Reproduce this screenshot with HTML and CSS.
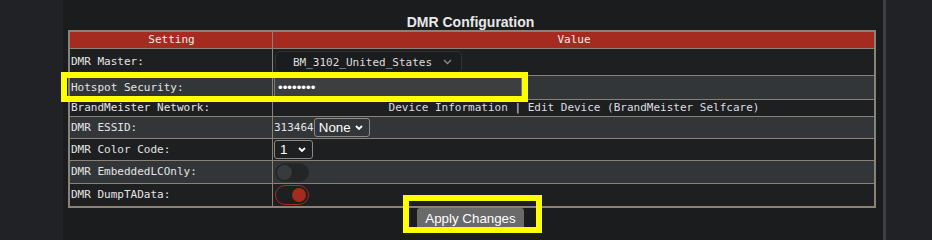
FILE: index.html
```html
<!DOCTYPE html>
<html lang="en">
<head>
    <meta charset="UTF-8">
    <meta name="viewport" content="width=device-width, initial-scale=1.0">
    <title>DMR Configuration</title>
    <link rel="stylesheet" href="styles.css">
</head>
<body>
    <div class="page">
        <div class="gutter"></div>
        <main class="panel">
            <h3 class="title">DMR Configuration</h3>
            <table class="config">
                <tr class="head">
                    <th class="col-setting">Setting</th>
                    <th>Value</th>
                </tr>
                <tr class="dark r-master">
                    <td class="label">DMR Master:</td>
                    <td>
                        <span class="select-wrap">
                            <select class="sel-master">
                                <option>BM_3102_United_States</option>
                            </select>
                            <svg class="chev chev-grey" width="9" height="6" viewBox="0 0 9 6"><polyline points="1,1 4.5,4.5 8,1" fill="none" stroke="#8a8a8a" stroke-width="1.4"/></svg>
                        </span>
                    </td>
                </tr>
                <tr class="light r-security">
                    <td class="label">Hotspot Security:</td>
                    <td><input class="pass" type="password" value="passw0rd"></td>
                </tr>
                <tr class="dark r-network">
                    <td class="label">BrandMeister Network:</td>
                    <td class="links"><a href="#">Device Information</a> | <a href="#">Edit Device (BrandMeister Selfcare)</a></td>
                </tr>
                <tr class="light r-essid">
                    <td class="label">DMR ESSID:</td>
                    <td>313464<span class="select-wrap">
                            <select class="sel-small sel-none">
                                <option>None</option>
                            </select>
                            <svg class="chev" width="8" height="6" viewBox="0 0 8 6"><polyline points="1,1 4,4 7,1" fill="none" stroke="#fff" stroke-width="1.8"/></svg>
                        </span></td>
                </tr>
                <tr class="dark r-color">
                    <td class="label">DMR Color Code:</td>
                    <td>
                        <span class="select-wrap">
                            <select class="sel-small sel-one">
                                <option>1</option>
                            </select>
                            <svg class="chev" width="8" height="6" viewBox="0 0 8 6"><polyline points="1,1 4,4 7,1" fill="none" stroke="#fff" stroke-width="1.8"/></svg>
                        </span>
                    </td>
                </tr>
                <tr class="light r-embedded">
                    <td class="label">DMR EmbeddedLCOnly:</td>
                    <td><span class="toggle"></span></td>
                </tr>
                <tr class="dark r-dump">
                    <td class="label">DMR DumpTAData:</td>
                    <td><span class="toggle on"></span></td>
                </tr>
            </table>
            <div class="actions">
                <button class="apply">Apply Changes</button>
            </div>
        </main>
    </div>

    <div class="mark mark-security"></div>
    <div class="mark mark-apply"></div>
</body>
</html>
```

FILE: styles.css
```css
* {
    margin: 0;
    padding: 0;
    box-sizing: border-box;
}
body {
    background: #202225;
    font-family: "DejaVu Sans Mono", monospace;
    font-size: 11px;
    color: #e4e4e4;
}
.page {
    display: flex;
    height: 240px;
}
.gutter {
    width: 63px;
}
.panel {
    width: 823px;
    padding: 0 10px 0 5px;
    background: #1b1c1e;
    border-right: 3px solid #3d3f42;
}
.title {
    padding-top: 15px;
    line-height: 15px;
    text-align: center;
    font-family: "Liberation Sans", Arial, sans-serif;
    font-size: 14px;
    font-weight: bold;
    color: #e8e8e8;
}

/* settings table */
.config {
    width: 808px;
    border: 2px solid #8b8176;
    border-spacing: 0;
    line-height: 14px;
}
.config th,
.config td {
    padding: 0 0 0 1px;
    border-bottom: 1px solid #8b8176;
    vertical-align: middle;
    text-align: left;
    white-space: nowrap;
}
.config tr:last-child td {
    border-bottom: none;
}
.config th:first-child,
.config td:first-child {
    width: 203px;
    border-right: 1px solid #8b8176;
}
.config th {
    background: #a52a1f;
    font-weight: normal;
    text-align: center;
    color: #ececec;
    height: 17px;
}
.dark { background: #1e1f21; }
.light { background: #333639; }
.r-master td { height: 27px; }
.r-security td { height: 24px; }
.r-network td { height: 17px; }
.r-essid td { height: 22px; }
.r-color td { height: 22px; }
.r-embedded td { height: 23px; }
.r-dump td { height: 22px; }

.links {
    text-align: center !important;
}
.links a {
    color: #dcdde2;
    text-decoration: none;
}

/* selects */
.select-wrap {
    position: relative;
    display: inline-block;
    vertical-align: middle;
}
.select-wrap select {
    appearance: none;
    -webkit-appearance: none;
    display: block;
    outline: none;
}
.chev {
    position: absolute;
    top: 50%;
    transform: translateY(-50%);
    pointer-events: none;
}
.sel-master {
    width: 187px;
    height: 22px;
    margin-left: 1px;
    padding-left: 17px;
    background: #1b1c1e;
    border: 1px solid #2f3134;
    border-radius: 5px;
    color: #dedede;
    font-family: "DejaVu Sans Mono", monospace;
    font-size: 11px;
}
.sel-master + .chev {
    right: 10px;
}
.sel-small {
    height: 19px;
    background: transparent;
    border: 1px solid #8a8a8a;
    border-radius: 3px;
    color: #ffffff;
    font-family: "Liberation Sans", Arial, sans-serif;
    font-size: 13.33px;
    padding-left: 4px;
}
.sel-none {
    width: 56px;
}
.sel-one {
    width: 39px;
    padding-left: 5px;
}
.sel-small + .chev {
    right: 7px;
}

/* password */
.pass {
    display: block;
    width: 248px;
    height: 22px;
    padding-left: 3px;
    background: #3d3e40;
    border: 1px solid #77787a;
    color: #ffffff;
    font-family: "Liberation Sans", Arial, sans-serif;
    font-size: 13.33px;
    outline: none;
}

/* switches */
.toggle {
    position: relative;
    display: block;
    width: 34px;
    height: 19px;
    margin-left: 1px;
    border-radius: 10px;
    background: #232527;
    border: 1px solid #26282a;
}
.toggle::after {
    content: "";
    position: absolute;
    top: 1px;
    left: 1px;
    width: 15px;
    height: 15px;
    border-radius: 50%;
    background: #383b3e;
}
.toggle.on {
    height: 20px;
    background: #1e1f21;
    border-color: #a52a1f;
}
.toggle.on::after {
    left: auto;
    right: 2px;
    top: 2px;
    width: 14px;
    height: 14px;
    background: #a52a1f;
}

/* actions */
.actions {
    text-align: center;
}
.apply {
    width: 107px;
    height: 21px;
    background: #6a6a6a;
    border: none;
    border-radius: 3px;
    color: #ffffff;
    font-family: "Liberation Sans", Arial, sans-serif;
    font-size: 13.33px;
    cursor: pointer;
}

/* highlight marks */
.mark {
    position: absolute;
    border: 6px solid #ffff00;
}
.mark-security {
    left: 61px;
    top: 72px;
    width: 467px;
    height: 30px;
}
.mark-apply {
    left: 403px;
    top: 195px;
    width: 139px;
    height: 38px;
}
```
